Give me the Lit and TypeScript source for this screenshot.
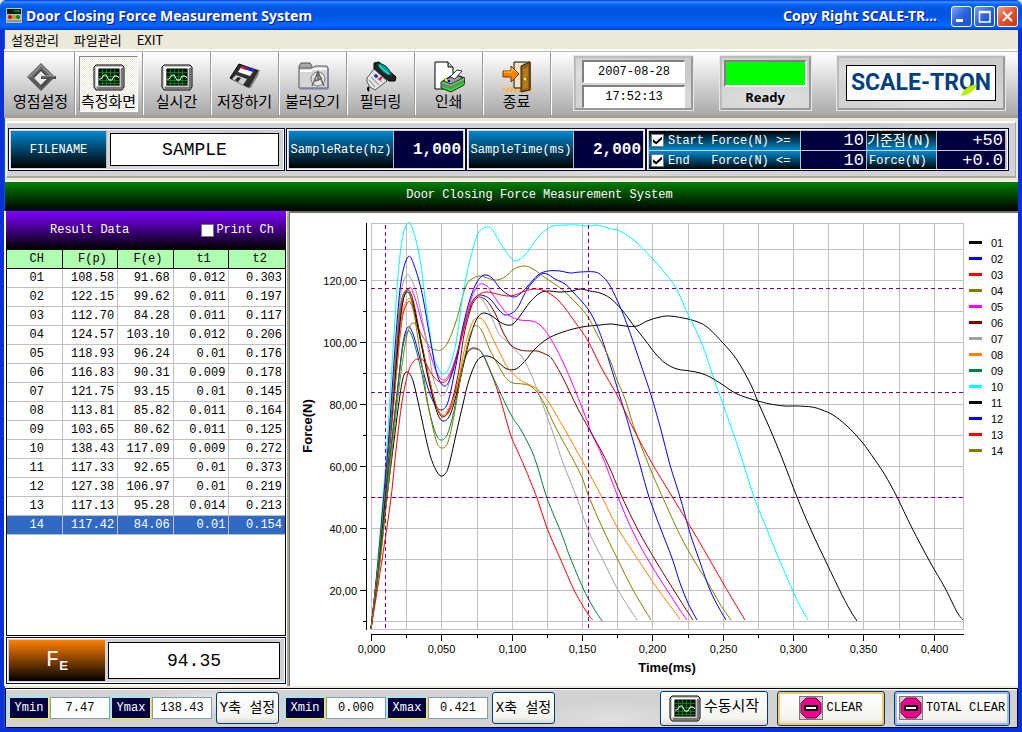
import { LitElement, html, svg, css } from "lit";
import { customElement, property } from "lit/decorators.js";
import { classMap } from "lit/directives/class-map.js";

type Point = [number, number];

interface Series {
  id: string;
  color: string;
  points: Point[];
}

const BLACK = "#000000";
const BLUE = "#0000ff";
const RED = "#ff0000";
const OLIVE = "#808000";

const series: Series[] = [
  { id: "01", color: BLACK, points: [[371,629],[380,560],[386,505],[393,449],[399,402],[403,378],[407,372],[412,378],[417,397],[427,443],[432,461],[437,472],[441,476],[445,474],[449,465],[457,430],[463,404],[469,380],[477,361],[485,356],[493,358],[499,363],[507,369],[516,369],[525,361],[534,350],[547,339],[563,332],[582,327],[600,325],[612,324],[625,326],[637,326],[647,321],[660,317],[670,316],[683,318],[695,321],[707,327],[723,343],[737,360],[751,385],[758,402],[770,429],[782,458],[797,497],[811,530],[827,564],[841,593],[850,610],[857,621]] },
  { id: "02", color: BLUE, points: [[371,629],[378,572],[384,510],[391,448],[398,385],[403,343],[408,327],[413,334],[419,355],[427,385],[434,403],[441,410],[448,402],[455,370],[463,330],[470,306],[476,297],[481,295],[490,299],[499,310],[505,315],[512,313],[518,307],[528,288],[540,275],[547,274],[555,279],[565,284],[573,292],[588,309],[597,326],[605,348],[617,387],[625,413],[630,430],[640,465],[649,497],[660,527],[672,558],[680,583],[688,603],[697,620]] },
  { id: "03", color: RED, points: [[371,629],[378,570],[384,508],[390,445],[397,368],[402,320],[408,302],[413,309],[421,342],[429,378],[436,405],[443,416],[450,410],[457,386],[463,364],[468,351],[473,348],[478,349],[483,355],[490,370],[500,398],[510,433],[517,450],[525,468],[537,498],[547,528],[560,558],[575,592],[588,614],[593,620]] },
  { id: "04", color: OLIVE, points: [[371,629],[379,570],[386,508],[393,442],[400,380],[406,340],[410,326],[413,323],[417,326],[423,337],[430,347],[436,350],[441,350],[447,344],[453,330],[458,315],[463,295],[467,284],[472,279],[480,276],[490,279],[497,280],[505,277],[514,269],[524,266],[533,269],[547,279],[563,290],[577,304],[588,317],[597,334],[610,360],[617,380],[625,399],[635,430],[652,473],[663,498],[680,535],[695,562],[708,583],[720,604],[731,620]] },
  { id: "05", color: "#ff00ff", points: [[371,629],[377,575],[383,510],[389,445],[396,360],[402,305],[409,288],[414,295],[422,323],[430,353],[437,373],[443,380],[449,375],[456,357],[463,333],[470,303],[475,290],[480,284],[487,286],[493,295],[503,309],[510,316],[520,320],[532,321],[540,325],[549,336],[562,360],[575,390],[588,423],[591,432],[603,458],[618,497],[633,532],[650,563],[667,590],[680,610],[687,620]] },
  { id: "06", color: "#800000", points: [[371,629],[377,575],[383,512],[390,440],[396,355],[401,304],[407,290],[413,300],[422,345],[430,382],[437,408],[443,417],[450,407],[458,375],[464,335],[471,308],[476,299],[480,297],[487,301],[495,313],[503,332],[511,345],[520,350],[530,351],[537,351],[545,354],[552,359],[563,378],[577,407],[588,427],[607,462],[622,497],[638,530],[657,563],[680,600],[693,620]] },
  { id: "07", color: "#a0a0a0", points: [[371,629],[377,572],[383,505],[389,435],[396,345],[401,293],[407,275],[413,283],[418,299],[427,343],[433,377],[438,391],[441,396],[446,392],[452,373],[459,346],[466,319],[472,301],[478,296],[487,307],[498,332],[504,339],[512,347],[522,357],[530,372],[538,392],[552,430],[563,463],[577,498],[588,530],[602,558],[618,590],[637,620]] },
  { id: "08", color: "#ff8000", points: [[371,629],[377,577],[383,515],[390,445],[397,365],[402,315],[408,299],[413,306],[421,343],[429,378],[436,404],[442,415],[449,408],[457,388],[463,356],[468,335],[473,321],[478,318],[484,321],[492,337],[501,355],[508,368],[520,380],[530,385],[538,390],[548,401],[565,430],[583,462],[602,497],[617,527],[637,558],[657,588],[680,619]] },
  { id: "09", color: "#008040", points: [[371,629],[378,572],[384,515],[391,450],[398,386],[403,346],[408,331],[413,339],[421,370],[429,410],[436,434],[441,440],[447,435],[453,415],[459,386],[465,359],[470,350],[475,349],[482,353],[493,377],[510,413],[521,430],[530,447],[537,465],[547,498],[562,535],[570,557],[583,588],[593,607],[602,621]] },
  { id: "10", color: "#00ffff", points: [[371,629],[376,580],[382,510],[387,445],[393,350],[398,277],[402,240],[407,224],[412,227],[420,259],[426,305],[433,353],[438,368],[443,374],[449,368],[456,343],[463,294],[470,260],[477,236],[482,229],[487,227],[492,229],[499,241],[510,257],[516,261],[525,255],[533,244],[540,235],[547,229],[553,226],[565,225],[577,225],[583,226],[590,226],[596,225],[605,227],[612,229],[620,231],[635,241],[652,258],[665,273],[676,288],[687,312],[702,344],[716,385],[724,407],[739,450],[754,497],[766,527],[779,559],[793,591],[800,606],[808,620]] },
  { id: "11", color: BLACK, points: [[371,629],[377,575],[384,508],[390,440],[397,356],[402,307],[407,292],[413,304],[421,343],[429,382],[437,412],[443,421],[450,415],[457,392],[464,362],[472,331],[478,317],[484,313],[492,316],[500,322],[507,325],[513,324],[520,316],[530,302],[540,293],[548,291],[560,292],[572,291],[580,289],[590,291],[600,293],[610,298],[622,310],[634,326],[645,340],[655,353],[665,363],[677,369],[690,371],[700,373],[710,377],[723,385],[735,393],[748,398],[758,401],[770,404],[785,406],[797,406],[812,407],[822,410],[833,415],[847,426],[862,442],[875,460],[885,475],[897,497],[912,528],[930,562],[945,588],[957,612],[963,620]] },
  { id: "12", color: BLUE, points: [[371,629],[377,573],[383,505],[389,435],[395,348],[401,282],[408,257],[414,265],[422,293],[430,338],[437,374],[444,386],[450,379],[457,356],[463,326],[470,299],[477,282],[484,275],[492,278],[499,287],[507,294],[514,297],[520,294],[527,287],[538,275],[548,271],[560,271],[570,273],[580,272],[595,272],[602,276],[609,284],[618,302],[628,327],[641,365],[651,395],[661,430],[670,465],[680,497],[690,533],[700,562],[710,590],[719,608],[726,620]] },
  { id: "13", color: RED, points: [[371,629],[382,560],[391,498],[396,450],[402,402],[408,373],[413,362],[418,359],[424,361],[433,376],[440,382],[446,381],[452,371],[460,343],[467,317],[473,301],[480,294],[487,292],[497,294],[507,296],[515,295],[525,291],[536,289],[547,292],[560,302],[575,322],[588,341],[602,369],[617,395],[633,428],[653,465],[673,498],[700,543],[723,583],[733,600],[745,620]] },
  { id: "14", color: OLIVE, points: [[371,629],[377,575],[383,512],[390,438],[396,352],[401,303],[407,290],[412,302],[420,352],[428,404],[436,440],[442,448],[448,442],[454,416],[461,375],[468,342],[473,328],[477,326],[482,331],[490,350],[502,372],[507,379],[513,383],[523,384],[530,386],[536,391],[544,403],[557,430],[580,473],[589,497],[602,527],[617,558],[633,590],[651,620]] },
];

const X0 = 371;
const X_PER_SECOND = 1407;
const Y_ZERO = 652;
const Y_PER_NEWTON = 3.1;
const xAt = (t: number) => Math.round(X0 + t * X_PER_SECOND) + 0.5;
const yAt = (force: number) => Math.round(Y_ZERO - force * Y_PER_NEWTON) + 0.5;

/* Catmull-Rom spline through all samples, written as cubic segments. */
function smooth(p: Point[]): string {
  let d = `M${p[0][0]} ${p[0][1]}`;
  for (let i = 0; i < p.length - 1; i++) {
    const a = p[i - 1] ?? p[i];
    const b = p[i];
    const c = p[i + 1];
    const e = p[i + 2] ?? c;
    const n = (v: number) => v.toFixed(1);
    d += `C${n(b[0] + (c[0] - a[0]) / 6)} ${n(b[1] + (c[1] - a[1]) / 6)} ${n(c[0] - (e[0] - b[0]) / 6)} ${n(c[1] - (e[1] - b[1]) / 6)} ${c[0]} ${c[1]}`;
  }
  return d;
}

@customElement("force-chart")
export class ForceChart extends LitElement {
  static styles = css`
    :host { display: block; min-width: 0; }
    .plot { display: block; width: 100%; height: 100%; }
    .grid { stroke: #c0c0c0; stroke-width: 1; shape-rendering: crispEdges; }
    .axis { stroke: #000; stroke-width: 1; shape-rendering: crispEdges; }
    .cursor { stroke: #800080; stroke-width: 1; stroke-dasharray: 4 3; shape-rendering: crispEdges; }
    .curve { fill: none; stroke-width: 1; }
    .key { stroke-width: 3; shape-rendering: crispEdges; }
    .tick { font: 11px "Liberation Sans", sans-serif; fill: #000; }
    .legend { font: 11px "Liberation Sans", sans-serif; fill: #000; }
    .name { font: bold 13px "Liberation Sans", sans-serif; fill: #000; }
  `;

  render() {
    const xs = Array.from({ length: 17 }, (_, i) => i * 0.025);
    const ys = Array.from({ length: 13 }, (_, i) => (i + 1) * 10);
    return html`<svg class="plot" viewBox="290 213 728 473" preserveAspectRatio="xMinYMin meet" role="img" aria-label="Force over time">
      ${xs.map((t) => svg`<line class="grid" x1=${xAt(t)} x2=${xAt(t)} y1="223" y2="629"/>`)}
      ${ys.map((f) => svg`<line class="grid" x1="371" x2="963" y1=${yAt(f)} y2=${yAt(f)}/>`)}
      <rect class="grid" x="371.5" y="223.5" width="592" height="406" fill="none"/>
      ${series.map((s) => svg`<path class="curve" stroke=${s.color} d=${smooth(s.points)}/>`)}
      <path class="cursor" d="M385.5 225V629M588.5 225V629M371 288.5H963M371 392.5H963M371 497.5H963"/>
      <path class="axis" fill="none" d="M366.5 223V630M371 634.5H964"/>
      ${xs.map((t, i) => svg`<line class="axis" x1=${xAt(t)} x2=${xAt(t)} y1="634" y2=${i % 2 ? 638 : 641}/>`)}
      ${ys.map((f, i) => svg`<line class="axis" x1=${i % 2 ? 360 : 363} x2="366" y1=${yAt(f)} y2=${yAt(f)}/>`)}
      ${xs.filter((_, i) => i % 2 === 0).map((t) => svg`<text class="tick" text-anchor="middle" x=${xAt(t)} y="653">${t.toFixed(3).replace(".", ",")}</text>`)}
      ${ys.filter((_, i) => i % 2 === 1).map((f) => svg`<text class="tick" text-anchor="end" x="357" y=${yAt(f) + 4}>${f.toFixed(2).replace(".", ",")}</text>`)}
      <text class="name" text-anchor="middle" x="667" y="672">Time(ms)</text>
      <text class="name" text-anchor="middle" transform="translate(312 426) rotate(-90)">Force(N)</text>
      ${series.map((s, i) => svg`<line class="key" stroke=${s.color} x1="969" x2="982" y1=${242.5 + i * 16} y2=${242.5 + i * 16}/>
        <text class="legend" x="991" y=${247 + i * 16}>${s.id}</text>`)}
    </svg>`;
  }
}

const icons: Record<string, unknown> = {
  zero: svg`<path d="M16 2 30 16 16 30 2 16Z" fill="#5a5a5c"/><path d="M16 3 29 16 27 17 16 6 5 17 3 16Z" fill="#8b8b8e"/><path d="M16 8 24 16 16 24 8 16Z" fill="#e9e9e9"/><path d="M16 8 24 16 22 16 16 10 9 17 8 16Z" fill="#333"/><path d="M23 17 16 24 16 27 26 17Z" fill="#48484a"/><path d="M16 15H31V18H16Z" fill="#4f4f52"/><path d="M16 15H30" stroke="#a9a9ac"/>`,
  scope: svg`<path d="M3 4H29L31 6V26L29 29H3L1 26V6Z" fill="#c8c8c8" stroke="#000"/><path d="M3 6H29V8H5V25H3Z" fill="#fff"/><path d="M29 7V27H4" fill="none" stroke="#777" stroke-width="2"/><rect x="6" y="8" width="20" height="16" fill="#001800" stroke="#000"/><path d="M9.500 8V24M13.500 8V24M17.500 8V24M21.500 8V24M6 11.500H26M6 15.500H26M6 19.500H26M6 22.500H26" stroke="#008018"/><path d="M6 18H8L11 14H13L16 19H19L21 15H24L26 17" fill="none" stroke="#fff" stroke-width="1"/>`,
  disk: svg`<path d="M10 3 31 9 29 15 22 27 18 27 1 18Z" fill="#999"/><path d="M10 3 29 10 20 26 1 17Z" fill="#2f2f2f" stroke="#000"/><path d="M13 5 25 9 21 15 9 11Z" fill="#fff"/><path d="M13 5 25 9 24 11 12 7Z" fill="#1818ff"/><path d="M13 5 18 7 17 9 12 7Z" fill="#e00020"/><path d="M7 14 18 18 14 24 3 18Z" fill="#d0d0d0"/><path d="M9 16 12 17 9 21 6 19Z" fill="#222"/><path d="M29 10V14L20 28V26Z" fill="#777"/>`,
  folder: svg`<path d="M2 5 4 2H13L15 5V8H2Z" fill="#aaa" stroke="#555"/><path d="M3 7 16 7 18 5H30L31 7V27H2V8Z" fill="#d6d6d6" stroke="#555"/><path d="M3 10H14L16 8H30" fill="none" stroke="#fff" stroke-width="2"/><path d="M31 7V28H3" fill="none" stroke="#7070b8"/><circle cx="21" cy="18" r="7" fill="#e4e4e4" stroke="#777"/><path d="M15 25 21 11 27 25M18 20 25 17M21 11V20" fill="none" stroke="#666" stroke-width="1.500"/>`,
  filter: svg`<path d="M9 2 14 1 31 16 30 20 24 20 9 8Z" fill="#222" stroke="#000"/><path d="M12 3Q22 1 27 15Q17 14 12 3Z" fill="#00a090" stroke="#004040"/><path d="M14 4Q17 8 24 13" fill="none" stroke="#78eee0"/><path d="M9 8 22 20 10 29 5 26 2 21 2 17Z" fill="#e8e8e8" stroke="#555"/><path d="M9 13 17 21M6 16 14 24M4 19 10 26" stroke="#aaa" stroke-width="1.500"/><path d="M11 13V17M9 15H13" stroke="#2222e0" stroke-width="1.500"/><path d="M14 19 17 16" stroke="#e01020" stroke-width="2"/><path d="M4 26Q2 28 4 30" fill="none" stroke="#000" stroke-width="2"/>`,
  printer: svg`<path d="M2 1H15L20 6V28H2Z" fill="#fff" stroke="#000"/><path d="M15 1V6H20" fill="#ccc" stroke="#000"/><path d="M8 21 21 13 32 17 31 24 18 31 8 27Z" fill="#58d858" stroke="#222"/><path d="M10 20 22 14 30 17 18 23Z" fill="#a0a0a0" stroke="#333"/><path d="M9 22 18 25 31 19V22L18 29 9 26Z" fill="#7b7b7b"/><path d="M9 26 18 29 31 22" fill="none" stroke="#00f000" stroke-width="1.500"/><path d="M17 16 24 9 29 10 22 18Z" fill="#fff" stroke="#333"/><path d="M12 19H14" stroke="#ff0" stroke-width="2"/><path d="M15 20H17" stroke="#00f" stroke-width="2"/>`,
  exit: svg`<path d="M0 26H32L30 31H4Z" fill="#f2c880"/><path d="M2 28H31M5 30H30" stroke="#d89a48" stroke-dasharray="2 2"/><path d="M13 1H29V27H13Z" fill="#b8c0c8" stroke="#222"/><path d="M14 2H22V26H14Z" fill="#efe4c8"/><path d="M20 5 29 1V29L20 31Z" fill="#956010" stroke="#302000"/><path d="M22 8 27 6V16L22 17ZM22 20 27 19V27L22 28Z" fill="#b47a20"/><circle cx="24" cy="18" r="1.500" fill="#fff060"/><path d="M2 10H10V5L18 13 10 21V16H2Z" fill="#ff8000" stroke="#803000"/><path d="M3 11H11V7L16 12" fill="none" stroke="#ffd040"/>`,
};

const icon = (name: string, size = "icon") => html`<svg class=${size} viewBox="0 0 32 32" aria-hidden="true">${icons[name]}</svg>`;

const stopIcon = html`<svg class="stop" viewBox="0 0 24 24" aria-hidden="true">
  <rect x="0.500" y="0.500" width="23" height="23" fill="#d8c8d0" stroke="#777"/>
  <path d="M7 2H17L22 7V17L17 22H7L2 17V7Z" fill="#f00090" stroke="#700040"/>
  <rect x="5" y="9" width="14" height="6" fill="#000"/><rect x="7" y="11" width="10" height="2" fill="#fff"/></svg>`;

const tools = [
  ["zero", "영점설정"],
  ["scope", "측정화면"],
  ["scope", "실시간"],
  ["disk", "저장하기"],
  ["folder", "불러오기"],
  ["filter", "필터링"],
  ["printer", "인쇄"],
  ["exit", "종료"],
];

const rows = [
  ["01", "108.58", "91.68", "0.012", "0.303"],
  ["02", "122.15", "99.62", "0.011", "0.197"],
  ["03", "112.70", "84.28", "0.011", "0.117"],
  ["04", "124.57", "103.10", "0.012", "0.206"],
  ["05", "118.93", "96.24", "0.01", "0.176"],
  ["06", "116.83", "90.31", "0.009", "0.178"],
  ["07", "121.75", "93.15", "0.01", "0.145"],
  ["08", "113.81", "85.82", "0.011", "0.164"],
  ["09", "103.65", "80.62", "0.011", "0.125"],
  ["10", "138.43", "117.09", "0.009", "0.272"],
  ["11", "117.33", "92.65", "0.01", "0.373"],
  ["12", "127.38", "106.97", "0.01", "0.219"],
  ["13", "117.13", "95.28", "0.014", "0.213"],
  ["14", "117.42", "84.06", "0.01", "0.154"],
];

@customElement("app-root")
export class AppRoot extends LitElement {
  @property() selected = "14";

  static styles = css`
    :host {
      display: flex; flex-direction: column; box-sizing: border-box; min-height: 100vh;
      background: #ece9d8; color: #000;
      font: 12px/16px "Liberation Mono", "Noto Sans CJK KR", monospace;
    }
    * { box-sizing: border-box; }
    input, button { font: inherit; color: inherit; margin: 0; padding: 0; border: 0; background: none; border-radius: 0; }
    .titlebar {
      display: flex; align-items: center; gap: 4px; height: 30px; padding: 2px 4px 0 6px; color: #fff;
      font: bold 14px/20px "Noto Sans", "Noto Sans CJK KR", sans-serif; text-shadow: 1px 1px #0f1089;
      background: linear-gradient(#0831d9 0, #3a93ff 2px, #0a6af5 4px, #0054e3 9px, #0055e5 16px, #0066ff 25px, #0060f8 27px, #0038c8 30px);
      border-radius: 6px 6px 0 0;
    }
    .appicon { width: 16px; height: 16px; }
    .grow { flex: 1; }
    .wins { display: flex; gap: 2px; padding-left: 10px; }
    .win { width: 21px; height: 21px; border: 1px solid #fff; border-radius: 3px; background: linear-gradient(135deg, #7aa5f5, #2a62e0 50%, #1a4fd0); }
    .win.close { background: linear-gradient(135deg, #f0a088, #e0512c 50%, #c03a14); }
    .win svg { display: block; width: 19px; height: 19px; }
    .body { flex: 1; display: flex; flex-direction: column; border: solid #0831d9; border-width: 0 4px 4px; box-shadow: inset 1px 0 #0855dd; }
    .menu { display: flex; gap: 15px; height: 19px; padding: 0 7px; font: 13px/19px "Noto Sans CJK KR", sans-serif; }
    .menu button { line-height: 18px; }
    .toolbar {
      display: flex; align-items: center; height: 69px; padding-left: 3px; border-top: 2px solid #fff; border-bottom: 3px solid #a5a294;
      background: linear-gradient(#b8b8b8 0, #b8b8b8 1px, #fff 1px, #f4f4f4 10px, #a9a9a9 100%);
    }
    .tools { display: flex; align-self: stretch; }
    .cell { width: 68px; padding: 5px 4px 3px; display: flex; border-right: 1px solid #999; box-shadow: 1px 0 #fff; }
    .tool { flex: 1; display: flex; flex-direction: column; align-items: center; gap: 2px; padding-top: 5px; font-size: 15px; line-height: 18px; white-space: nowrap; }
    .tool span { margin: 0 -4px; }
    .tool.on { border: 1px solid; border-color: #888 #fff #fff #888; padding-top: 4px; background: repeating-conic-gradient(#fff 0 25%, #ece9d8 0 50%) 0 0 / 2px 2px; }
    .icon { width: 32px; height: 32px; flex: none; }
    .small { width: 32px; height: 32px; flex: none; }
    .marble {
      background:
        radial-gradient(ellipse 60px 14px at 20% 30%, #e6e6e6, transparent),
        radial-gradient(ellipse 80px 20px at 60% 80%, #e0e0e2, transparent),
        radial-gradient(ellipse 50px 24px at 85% 20%, #c6c6c8, transparent), #d2d2d4;
    }
    .panels { flex: 1; display: flex; justify-content: space-between; padding: 0 13px 0 23px; }
    .panel { height: 54px; border: 2px solid; border-color: #bbb #999 #999 #bbb; outline: 1px solid #e8e8e8; padding: 2px; }
    .clock { width: 119px; display: flex; flex-direction: column; gap: 2px; padding: 2px 6px; text-align: center; }
    .clock span { flex: 1; background: #fff; line-height: 20px; border: 1px solid; border-width: 2px 1px 1px 2px; border-color: #808080 #fff #fff #808080; }
    .status { width: 91px; text-align: center; font: bold 13px/20px "Noto Sans", sans-serif; }
    .lamp { height: 27px; background: #0f0; border: 2px solid; border-color: #808080 #fff #fff #808080; }
    .brand { width: 168px; padding: 7px; }
    .logo {
      position: relative; height: 36px; border: 1px solid #000; background: #fff; color: #004080; text-align: center;
      font: bold 23px/34px Roboto, sans-serif; white-space: nowrap;
    }
    .leaf { position: absolute; right: 17px; bottom: 4px; width: 18px; height: 13px; }
    .info { display: flex; margin: 3px 2px; height: 57px; padding: 5px 6px 5px 1px; border: solid; border-width: 2px 1px 2px 1px; border-color: #fff #aca899 #aca899 #fff; }
    .box { display: flex; border: 1px solid #000040; outline: 1px solid #fff; outline-offset: -2px; padding: 2px; }
    .lab { display: flex; align-items: center; justify-content: center; color: #fff; background: linear-gradient(#0088cc, #004468 50%, #000); white-space: nowrap; border-right: 1px solid #bbb; }
    .lab.flip { background: linear-gradient(#000, #004468 50%, #0088cc); }
    .lab.flop { background: linear-gradient(#0088cc, #004468 50%, #000); }
    .num { min-width: 0; width: 100%; text-align: right; color: #fff; background: #000040; font-size: 16px; font-weight: bold; padding-right: 2px; }
    .file { width: 277px; margin-right: 1px; }
    .file .lab { width: 96px; }
    .filefield { flex: 1; margin: 2px 3px; min-width: 0; border: 1px solid #000; background: #fff; text-align: center; font-size: 18px; font-weight: normal; }
    .rate { width: 180px; }
    .rate .lab { width: 105px; flex: none; }
    .limits { flex: 1; display: grid; grid-template-columns: 152px 66px 70px 1fr; grid-template-rows: 1fr 1fr; gap: 1px 0; background: #ccc; }
    .limits .lab { justify-content: flex-start; gap: 4px; padding-left: 2px; white-space: pre; }
    .limits .num { font-weight: normal; border-right: 1px solid #bbb; font-size: 17px; }
    .limits .base { font-size: 14px; padding-left: 0; }
    .check { appearance: none; width: 13px; height: 13px; flex: none; background: #fff; border: 1px solid #777; display: grid; place-items: center; }
    .check:checked::before { content: ""; width: 9px; height: 8px; background: #000; clip-path: polygon(0 35%, 35% 65%, 100% 0, 100% 35%, 35% 100%, 0 70%); }
    .banner { height: 30px; margin-left: 1px; padding-left: 56px; border-top: 1px solid #fff; color: #fff; text-align: center; line-height: 27px; background: linear-gradient(#008000, #000); }
    .main { flex: 1; display: flex; min-height: 0; }
    .side { width: 285px; flex: none; display: flex; flex-direction: column; padding: 0 1px 0 2px; background: #fff; border-right: 2px solid #aca899; }
    .result { display: flex; align-items: center; height: 38px; color: #fff; background: linear-gradient(#8000ff, #000); padding: 0 12px 0 44px; justify-content: space-between; }
    .print { display: flex; align-items: center; gap: 2px; }
    .grid { flex: 1; border: 1px solid #000; border-top: 0; }
    table { width: 100%; table-layout: fixed; border-collapse: separate; border-spacing: 0; }
    th, td { height: 19px; padding: 0 3px 0 0; line-height: 18px; font-weight: normal; border-right: 1px solid #c0c0c0; border-bottom: 1px solid #c0c0c0; text-align: right; }
    th { background: #b0ffb0; border-color: #000; text-align: center; border-top: 1px solid #000; }
    th:last-child, td:last-child { border-right: 0; }
    th, td:first-child { text-align: center; padding: 0 0 0 5px; }
    .sel td { background: #316ac5; color: #fff; }
    .fe { height: 47px; margin: 1px 0 2px; width: 100%; }
    .felab { width: 96px; display: flex; align-items: center; justify-content: center; color: #fff; font-size: 22px; background: linear-gradient(#ff8000, #000); }
    .felab sub { font: bold 13px/13px "Liberation Sans", sans-serif; align-self: center; padding-top: 10px; }
    .fe .filefield { font-size: 18px; }
    .chart { flex: 1; background: #fff; border: solid #716f64; border-width: 2px 0 0 1px; }
    .foot { display: flex; align-items: center; height: 40px; margin: 2px 0 0 1px; border: 1px solid #000; padding: 0 7px 0 3px; gap: 1px; box-shadow: inset 0 1px #fff; }
    .tag { width: 40px; height: 22px; line-height: 20px; text-align: center; color: #fff; background: #000040; border: 1px solid; border-color: #80ffff #ffff00 #ffff00 #80ffff; }
    .val { width: 60px; height: 22px; background: #fff; border: 1px solid #7f9db9; text-align: center; }
    .btn { display: flex; align-items: center; justify-content: center; gap: 3px; height: 32px; border: 1px solid #003c74; border-radius: 3px; background: linear-gradient(#fff, #f4f4f0 80%, #dcd8cc); white-space: nowrap; }
    .set { width: 63px; margin: 0 5px 0 3px; font-size: 14px; }
    .big { height: 35px; margin-left: 8px; width: 108px; }
    .start { font-size: 15px; }
    .hot { box-shadow: inset 0 0 0 2px #fbc761; }
    .dflt { width: 116px; box-shadow: inset 0 0 0 2px #9cbbf0; }
    .stop { width: 24px; height: 24px; flex: none; }
  `;

  private setting(name: string, value: string) {
    return html`<label class="tag" for=${name}>${name}</label><input class="val" id=${name} .value=${value} />`;
  }

  render() {
    return html`
      <header class="titlebar">
        <svg class="appicon" viewBox="0 0 16 16" aria-hidden="true"><rect width="16" height="15" fill="#bbb"/><rect x="1" y="1" width="14" height="5" fill="#021"/><path d="M8 3H14" stroke="#0c4"/><circle cx="4" cy="9" r="2" fill="#c00"/><circle cx="8" cy="9" r="2" fill="#c90"/><circle cx="12" cy="9" r="2" fill="#080"/><path d="M1 13H15" stroke="#666"/></svg>
        <span>Door Closing Force Measurement System</span>
        <span class="grow"></span>
        <span>Copy Right SCALE-TR...</span>
        <div class="wins">
          <button class="win" aria-label="Minimize"><svg viewBox="0 0 19 19"><rect x="4" y="12" width="7" height="3" fill="#fff"/></svg></button>
          <button class="win" aria-label="Maximize"><svg viewBox="0 0 19 19"><path d="M4 4.500H15V15H4.500V4M4 5.500H15" fill="none" stroke="#fff" stroke-width="1.500"/></svg></button>
          <button class="win close" aria-label="Close"><svg viewBox="0 0 19 19"><path d="M5 5 14 14M14 5 5 14" stroke="#fff" stroke-width="2.200"/></svg></button>
        </div>
      </header>
      <div class="body">
        <nav class="menu"><button>설정관리</button><button>파일관리</button><button>EXIT</button></nav>
        <div class="toolbar">
          <div class="tools">
            ${tools.map(([name, label], i) => html`<div class="cell"><button class=${classMap({ tool: true, on: i === 1 })}>${icon(name)}<span>${label}</span></button></div>`)}
          </div>
          <div class="panels">
            <div class="panel marble clock"><span>2007-08-28</span><span>17:52:13</span></div>
            <div class="panel marble status"><div class="lamp"></div>Ready</div>
            <div class="panel marble brand"><div class="logo">SCALE-TRON<svg class="leaf" viewBox="0 0 18 13" aria-hidden="true"><path d="M1 13Q4 3 17 1Q14 11 1 13Z" fill="#b8f000"/></svg></div></div>
          </div>
        </div>
        <section class="info marble">
          <div class="box file marble"><label class="lab" for="file">FILENAME</label><input class="filefield" id="file" .value=${"SAMPLE"} /></div>
          <div class="box rate"><label class="lab" for="rate">SampleRate(hz)</label><input class="num" id="rate" .value=${"1,000"} /></div>
          <div class="box rate"><label class="lab" for="time">SampleTime(ms)</label><input class="num" id="time" .value=${"2,000"} /></div>
          <div class="box limits">
            <label class="lab flip"><input class="check" type="checkbox" checked />Start Force(N) &gt;=</label>
            <input class="num" aria-label="Start force" .value=${"10"} />
            <label class="lab flip base" for="base">기준점(N)</label>
            <input class="num" id="base" .value=${"+50"} />
            <label class="lab flop"><input class="check" type="checkbox" checked />End   Force(N) &lt;=</label>
            <input class="num" aria-label="End force" .value=${"10"} />
            <label class="lab flop" for="force">Force(N)</label>
            <input class="num" id="force" .value=${"+0.0"} />
          </div>
        </section>
        <div class="banner">Door Closing Force Measurement System</div>
        <main class="main">
          <section class="side">
            <div class="result"><span>Result Data</span><label class="print"><input class="check" type="checkbox" />Print Ch</label></div>
            <div class="grid">
              <table>
                <thead><tr>${["CH", "F(p)", "F(e)", "t1", "t2"].map((h) => html`<th>${h}</th>`)}</tr></thead>
                <tbody>${rows.map((r) => html`<tr class=${classMap({ sel: r[0] === this.selected })}>${r.map((c) => html`<td>${c}</td>`)}</tr>`)}</tbody>
              </table>
            </div>
            <div class="box fe marble"><label class="felab" for="fe">F<sub>E</sub></label><input class="filefield" id="fe" .value=${"94.35"} /></div>
          </section>
          <force-chart class="chart"></force-chart>
        </main>
        <footer class="foot marble">
          ${this.setting("Ymin", "7.47")}${this.setting("Ymax", "138.43")}
          <button class="btn set">Y축 설정</button>
          ${this.setting("Xmin", "0.000")}${this.setting("Xmax", "0.421")}
          <button class="btn set">X축 설정</button>
          <span class="grow"></span>
          <button class="btn big start">${icon("scope", "small")}수동시작</button>
          <button class="btn big hot">${stopIcon}CLEAR</button>
          <button class="btn big dflt">${stopIcon}TOTAL CLEAR</button>
        </footer>
      </div>
    `;
  }
}
